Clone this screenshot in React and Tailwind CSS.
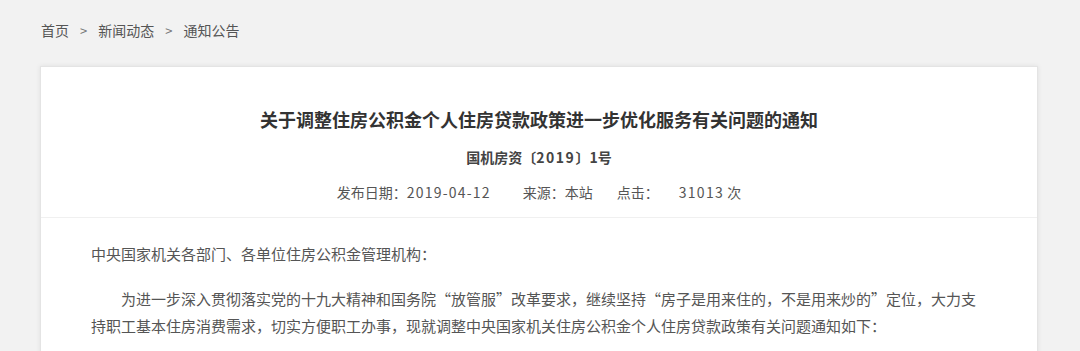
export default function App() {
  return (
    <div
      lang="zh-CN"
      className="min-h-[351px] bg-[#f2f2f2] pt-[20px] pb-[20px]"
      style={{ fontFamily: '"Noto Sans CJK SC", "Noto Sans", sans-serif' }}
    >
      <div className="ml-[41px] flex items-center text-[14px] leading-[21px] text-[#555]">
        <span>首页</span>
        <span className="mx-[11px] text-[13px] text-[#777]">&gt;</span>
        <span>新闻动态</span>
        <span className="mx-[11px] text-[13px] text-[#777]">&gt;</span>
        <span>通知公告</span>
      </div>

      <div className="ml-[40px] mt-[25px] w-[998px] border border-[#e4e4e4] bg-white shadow-[0_0_5px_rgba(0,0,0,0.08)]">
        <div className="border-b border-[#f0f0f0] pt-[39px] pb-[14px] text-center">
          <h1 className="text-[18px] font-bold leading-[27px] text-[#333]">
            关于调整住房公积金个人住房贷款政策进一步优化服务有关问题的通知
          </h1>
          <div className="mt-[14px] text-[14px] font-bold leading-[21px] text-[#444]">
            国机房资〔<span className="tracking-[1.5px]">2019</span>〕1号
          </div>
          <div className="mt-[14px] flex justify-center text-[14px] leading-[21px] text-[#555]">
            <span>
              发布日期：<span className="tracking-[1.2px]">2019-04-12</span>
            </span>
            <span className="ml-[32px]">来源：本站</span>
            <span className="ml-[24px]">点击：</span>
            <span className="ml-[20px]">
              <span className="tracking-[1.3px]">31013</span> 次
            </span>
          </div>
        </div>
        <div className="px-[50px] pt-[22px] pb-[20px] text-[15px] leading-[27px] text-[#555]">
          <p>中央国家机关各部门、各单位住房公积金管理机构：</p>
          <p className="mt-[18px] indent-[30px]">
            为进一步深入贯彻落实党的十九大精神和国务院“放管服”改革要求，继续坚持“房子是用来住的，不是用来炒的”定位，大力支持职工基本住房消费需求，切实方便职工办事，现就调整中央国家机关住房公积金个人住房贷款政策有关问题通知如下：
          </p>
        </div>
      </div>
    </div>
  );
}
